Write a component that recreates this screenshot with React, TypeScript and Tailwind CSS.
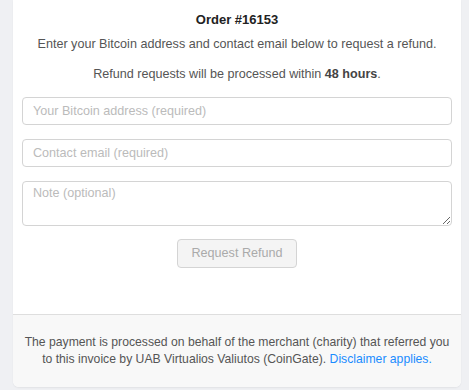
export default function App() {
  return (
    <div className="min-h-screen bg-[#eff0f3] font-['Liberation_Sans',Arial,sans-serif]">
      <div className="mx-[13px] w-[448px] overflow-hidden rounded-b-[6px] bg-white shadow-[0_1px_2px_rgba(0,0,0,0.06)]">
        <div className="px-[9px] pt-[12px] pb-[46px] text-center">
          <h2 className="text-[13px] font-bold leading-[16px] text-[#222]">Order #16153</h2>
          <p className="mt-[8px] text-[12.6px] leading-[16px] text-[#555]">
            Enter your Bitcoin address and contact email below to request a refund.
          </p>
          <p className="mt-[14px] text-[12.6px] leading-[16px] text-[#555]">
            Refund requests will be processed within <b className="text-[#444]">48 hours</b>.
          </p>
          <form className="mt-[15px] flex flex-col gap-[14px]">
            <input
              className="h-[28px] w-full rounded-[4px] border border-[#d4d4d4] px-[10px] text-[12.6px] text-[#333] outline-none placeholder:text-[#bbb]"
              placeholder="Your Bitcoin address (required)"
            />
            <input
              className="h-[28px] w-full rounded-[4px] border border-[#d4d4d4] px-[10px] text-[12.6px] text-[#333] outline-none placeholder:text-[#bbb]"
              placeholder="Contact email (required)"
            />
            <textarea
              className="block h-[45px] w-full rounded-[4px] border border-[#d4d4d4] px-[10px] py-[3px] text-[12.6px] leading-[16px] text-[#333] outline-none placeholder:text-[#bbb]"
              placeholder="Note (optional)"
            />
            <div className="-mt-[1px] flex justify-center">
              <button
                type="button"
                disabled
                className="h-[29px] w-[120px] rounded-[4px] border border-[#d4d4d4] bg-[#f4f4f4] text-[12.6px] text-[#aaa]"
              >
                Request Refund
              </button>
            </div>
          </form>
        </div>
        <div className="border-t border-[#dedede] bg-[#f8f8f8] px-[8px] pt-[19px] pb-[19px] text-center text-[12.2px] leading-[17px] text-[#555]">
          <p>
            The payment is processed on behalf of the merchant (charity) that referred you to this
            invoice by UAB Virtualios Valiutos (CoinGate).{" "}
            <a className="text-[#1a8cff]" href="#">
              Disclaimer applies.
            </a>
          </p>
        </div>
      </div>
    </div>
  );
}
